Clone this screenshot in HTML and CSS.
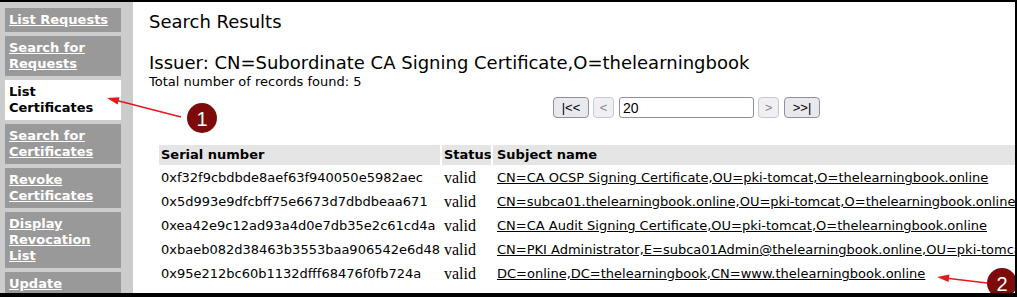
FILE: index.html
```html
<!DOCTYPE html>
<html>
<head>
<meta charset="utf-8">
<title>Search Results</title>
<link rel="stylesheet" href="styles.css">
</head>
<body>
<div class="frame">
  <aside class="sidebar">
    <a class="nav-item" href="#">List Requests</a>
    <a class="nav-item" href="#">Search for Requests</a>
    <span class="nav-item active">List Certificates</span>
    <a class="nav-item" href="#">Search for Certificates</a>
    <a class="nav-item" href="#">Revoke Certificates</a>
    <a class="nav-item" href="#">Display Revocation List</a>
    <a class="nav-item" href="#">Update</a>
  </aside>
  <main class="content">
    <h1 class="title">Search Results</h1>
    <h2 class="issuer">Issuer: CN=Subordinate CA Signing Certificate,O=thelearningbook</h2>
    <p class="total">Total number of records found: 5</p>
    <div class="pager">
      <button class="btn wide">|&lt;&lt;</button>
      <button class="btn narrow" disabled>&lt;</button>
      <input class="page-input" type="text" value="20">
      <button class="btn narrow" disabled>&gt;</button>
      <button class="btn wide">&gt;&gt;|</button>
    </div>
    <table class="results">
      <colgroup>
        <col class="c-serial">
        <col class="c-status">
        <col class="c-subject">
      </colgroup>
      <thead>
        <tr><th class="serial">Serial number</th><th class="status">Status</th><th class="subject">Subject name</th></tr>
      </thead>
      <tbody>
        <tr><td class="serial">0xf32f9cbdbde8aef63f940050e5982aec</td><td class="status">valid</td><td class="subject"><a href="#">CN=CA OCSP Signing Certificate,OU=pki-tomcat,O=thelearningbook.online</a></td></tr>
        <tr><td class="serial">0x5d993e9dfcbff75e6673d7dbdbeaa671</td><td class="status">valid</td><td class="subject"><a href="#">CN=subca01.thelearningbook.online,OU=pki-tomcat,O=thelearningbook.online</a></td></tr>
        <tr><td class="serial">0xea42e9c12ad93a4d0e7db35e2c61cd4a</td><td class="status">valid</td><td class="subject"><a href="#">CN=CA Audit Signing Certificate,OU=pki-tomcat,O=thelearningbook.online</a></td></tr>
        <tr><td class="serial">0xbaeb082d38463b3553baa906542e6d48</td><td class="status">valid</td><td class="subject"><a href="#">CN=PKI Administrator,E=subca01Admin@thelearningbook.online,OU=pki-tomcat,O=thelearningbook.online</a></td></tr>
        <tr><td class="serial">0x95e212bc60b1132dfff68476f0fb724a</td><td class="status">valid</td><td class="subject"><a href="#">DC=online,DC=thelearningbook,CN=www.thelearningbook.online</a></td></tr>
      </tbody>
    </table>
  </main>
  <svg class="annot" width="1017" height="297" viewBox="0 0 1017 297">
    <line x1="181" y1="117" x2="117" y2="100.6" stroke="#e3191c" stroke-width="1.6"/>
    <polygon points="107,98 119.5,97.2 117.6,104.4" fill="#e3191c"/>
    <circle cx="202" cy="118" r="15" fill="#7d0b0b"/>
    <text x="202" y="119" class="num">1</text>
    <line x1="987" y1="283" x2="947" y2="278.2" stroke="#e3191c" stroke-width="1.6"/>
    <polygon points="937,277 949.4,274.6 948.6,282" fill="#e3191c"/>
    <circle cx="1002" cy="283" r="15" fill="#7d0b0b"/>
    <text x="1002" y="284" class="num">2</text>
  </svg>
</div>
</body>
</html>
```
FILE: styles.css
```css
* { box-sizing: border-box; }
html, body { margin: 0; padding: 0; background: #fff; }
body { font-family: "DejaVu Sans", Verdana, sans-serif; color: #000; }

.frame {
  position: relative;
  width: 1017px;
  height: 297px;
  border-top: 2px solid #000;
  border-right: 2px solid #000;
  border-bottom: 4px solid #000;
  display: flex;
  overflow: hidden;
  background: #fff;
}

.sidebar {
  width: 133px;
  flex-shrink: 0;
  background: #cccccc;
  padding: 6px 0 0 5px;
  display: flex;
  flex-direction: column;
  gap: 4px;
}

.nav-item {
  display: block;
  width: 116px;
  background: #999999;
  color: #fff;
  font-weight: bold;
  font-size: 13px;
  line-height: 16px;
  padding: 4px 4px;
  text-decoration: underline;
}
.nav-item.active {
  background: #fff;
  color: #000;
  text-decoration: none;
}

.content {
  flex: 1;
  min-width: 0;
  padding: 9px 0 0 16px;
}

.title {
  margin: 0;
  font-size: 18px;
  line-height: 22px;
  font-weight: normal;
}
.issuer {
  margin: 19px 0 0;
  font-size: 18px;
  line-height: 22px;
  font-weight: normal;
  white-space: nowrap;
}
.total {
  margin: 0;
  font-size: 13px;
  line-height: 16px;
}

.pager {
  margin: 7px 0 0 404px;
  display: flex;
  align-items: center;
  height: 21px;
}
.btn {
  height: 21px;
  margin: 0 4px 0 0;
  padding: 0;
  font-family: "Liberation Sans", Arial, sans-serif;
  font-size: 13px;
  color: #000;
  background: #e9e9ed;
  border: 1px solid #8f8f9d;
  border-radius: 4px;
}
.btn.wide { width: 36px; }
.btn.narrow { width: 21px; }
.btn:disabled {
  color: #8a8a8a;
  background: #f0f0f4;
  border-color: #c8c8d0;
}
.page-input {
  width: 135px;
  height: 21px;
  margin: 0 4px 0 1px;
  padding: 0 3px;
  font-family: "Liberation Sans", Arial, sans-serif;
  font-size: 14px;
  color: #000;
  background: #fff;
  border: 1px solid #8f8f9d;
  border-radius: 3px;
}
.btn + .btn.wide { margin-left: 1px; }

.results {
  margin: 25px 0 0 8px;
  border-spacing: 2px;
  table-layout: fixed;
  width: 898px;
  font-size: 13px;
}
.c-serial { width: 281px; }
.c-status { width: 49px; }
.c-subject { width: 560px; }

.results th {
  background: #e5e5e5;
  text-align: left;
  font-weight: bold;
  line-height: 18px;
  padding: 1px 2px;
  white-space: nowrap;
  overflow: hidden;
}
.results td {
  line-height: 20px;
  padding: 1px 2px;
  white-space: nowrap;
  vertical-align: middle;
}
.results .subject { padding-left: 4px; }
.results td.status {
  font-family: "Liberation Serif", "Times New Roman", serif;
  font-size: 16px;
}
.results td.subject { overflow: visible; }
.results a { color: #000; text-decoration: underline; }

.annot {
  position: absolute;
  left: 0;
  top: -2px;
  pointer-events: none;
}
.num {
  fill: #fff;
  font-family: "Liberation Sans", Arial, sans-serif;
  font-size: 20px;
  text-anchor: middle;
  dominant-baseline: central;
}
```
